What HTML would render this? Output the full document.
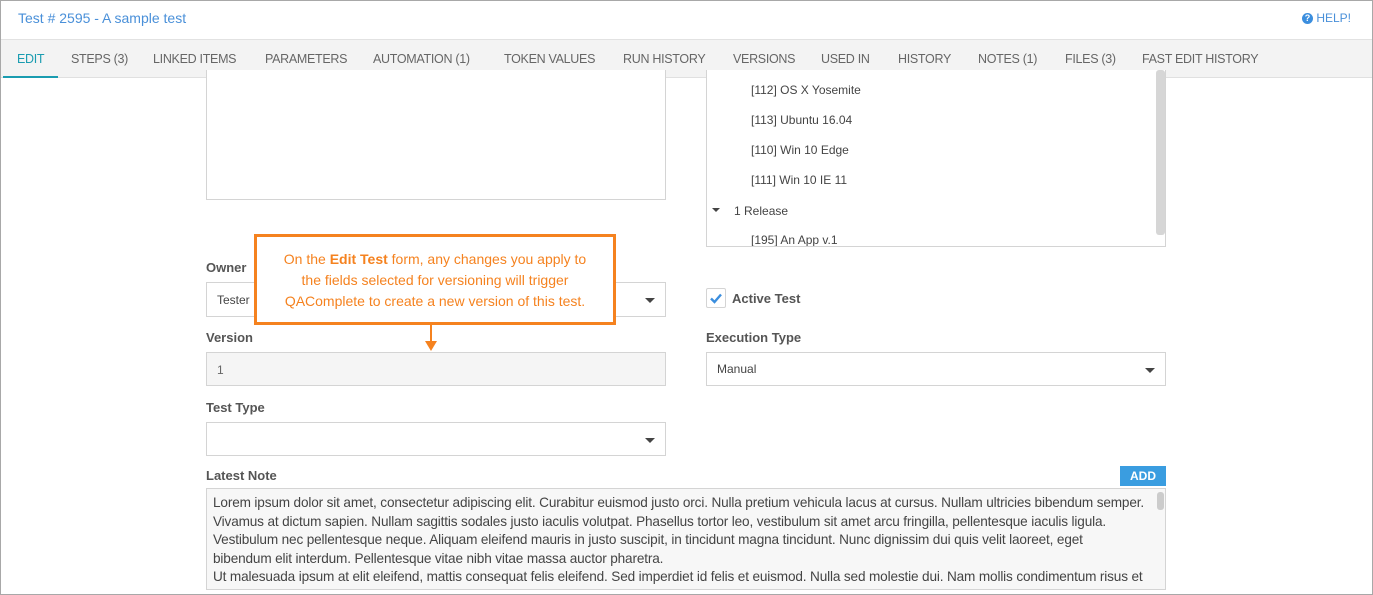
<!DOCTYPE html>
<html><head><style>
*{box-sizing:border-box;margin:0;padding:0}
body{width:1373px;height:595px;overflow:hidden;background:#fff;font-family:"Liberation Sans",sans-serif;position:relative}
.frame{position:absolute;left:0;top:0;width:1373px;height:595px;border:1px solid #a8a8a8}
.a{position:absolute;white-space:nowrap}
.title{left:18px;top:10px;font-size:14px;color:#4a90d9}
.help{right:22px;top:11px;font-size:12px;color:#4a90d9}
.tabs{left:1px;top:39px;width:1371px;height:39px;background:#f3f3f3;border-top:1px solid #e2e2e2;border-bottom:1px solid #e0e0e0}
.tab{top:12px;font-size:12.5px;color:#666;letter-spacing:-0.3px}
.lbl{font-size:13px;color:#555;font-weight:bold}
.box{position:absolute;border:1px solid #d4d4d4;background:#fff}
.caret{position:absolute;width:0;height:0;border-left:5px solid transparent;border-right:5px solid transparent;border-top:5px solid #444}
.tree{font-size:12px;color:#444}
</style></head><body>
<div class="frame"></div>
<div class="a title">Test # 2595 - A sample test</div>
<div class="a help"><span style="display:inline-block;width:11px;height:11px;border-radius:50%;background:#3b8ede;color:#fff;font-size:9px;text-align:center;line-height:11px;font-weight:bold;vertical-align:1px">?</span> HELP!</div>
<div class="a tabs">
<div class="a tab" style="left:16px;color:#1a9cb0">EDIT</div>
<div class="a" style="left:2px;top:36px;width:55px;height:2px;background:#1a9cb0"></div>
<div class="a tab" style="left:70px">STEPS (3)</div>
<div class="a tab" style="left:152px">LINKED ITEMS</div>
<div class="a tab" style="left:264px">PARAMETERS</div>
<div class="a tab" style="left:372px">AUTOMATION (1)</div>
<div class="a tab" style="left:503px">TOKEN VALUES</div>
<div class="a tab" style="left:622px">RUN HISTORY</div>
<div class="a tab" style="left:732px">VERSIONS</div>
<div class="a tab" style="left:820px">USED IN</div>
<div class="a tab" style="left:897px">HISTORY</div>
<div class="a tab" style="left:977px">NOTES (1)</div>
<div class="a tab" style="left:1064px">FILES (3)</div>
<div class="a tab" style="left:1141px">FAST EDIT HISTORY</div>
</div>
<div class="box" style="left:206px;top:70px;width:460px;height:130px;border-top:none"></div>
<div class="box" style="left:706px;top:70px;width:460px;height:177px;border-top:none;overflow:hidden">
<div class="a" style="right:0;top:0;width:9px;height:165px;background:#d6d6d6;border-radius:3px"></div>
<div class="a tree" style="left:44px;top:13px">[112] OS X Yosemite</div>
<div class="a tree" style="left:44px;top:43px">[113] Ubuntu 16.04</div>
<div class="a tree" style="left:44px;top:73px">[110] Win 10 Edge</div>
<div class="a tree" style="left:44px;top:103px">[111] Win 10 IE 11</div>
<div class="caret" style="left:5px;top:138px;border-width:4px 4px 0 4px"></div>
<div class="a tree" style="left:27px;top:134px">1 Release</div>
<div class="a tree" style="left:44px;top:163px">[195] An App v.1</div>
</div>
<div class="a lbl" style="left:206px;top:260px">Owner</div>
<div class="box" style="left:206px;top:282px;width:460px;height:35px"><div class="a" style="left:10px;top:10px;font-size:12px;color:#444">Tester</div><div class="caret" style="right:10px;top:15px"></div></div>
<div class="a lbl" style="left:206px;top:330px">Version</div>
<div class="box" style="left:206px;top:352px;width:460px;height:34px;background:#f5f5f5"><div class="a" style="left:10px;top:10px;font-size:12px;color:#666">1</div></div>
<div class="a lbl" style="left:206px;top:400px">Test Type</div>
<div class="box" style="left:206px;top:422px;width:460px;height:34px"><div class="caret" style="right:10px;top:15px"></div></div>
<div class="box" style="left:706px;top:288px;width:20px;height:20px;border-radius:2px"><svg width="18" height="18" style="position:absolute;left:0;top:0"><path d="M4 9.5 L7.5 13 L14 5.5" stroke="#3b8ede" stroke-width="2.4" fill="none"/></svg></div>
<div class="a lbl" style="left:732px;top:291px">Active Test</div>
<div class="a lbl" style="left:706px;top:330px">Execution Type</div>
<div class="box" style="left:706px;top:352px;width:460px;height:34px"><div class="a" style="left:10px;top:9px;font-size:12px;color:#444">Manual</div><div class="caret" style="right:10px;top:15px"></div></div>
<div class="a lbl" style="left:206px;top:468px">Latest Note</div>
<div class="a" style="left:1120px;top:466px;width:46px;height:20px;background:#3a9de0;color:#fff;font-size:12px;font-weight:bold;text-align:center;line-height:20px">ADD</div>
<div class="box" style="left:206px;top:488px;width:960px;height:102px;background:#f7f7f7;overflow:hidden">
<div class="a" style="right:1px;top:3px;width:7px;height:18px;background:#ccc;border-radius:3px"></div>
<div style="position:absolute;left:6px;top:5px;font-size:13.6px;line-height:18.5px;color:#444;white-space:nowrap;letter-spacing:-0.15px">
Lorem ipsum dolor sit amet, consectetur adipiscing elit. Curabitur euismod justo orci. Nulla pretium vehicula lacus at cursus. Nullam ultricies bibendum semper.<br>
Vivamus at dictum sapien. Nullam sagittis sodales justo iaculis volutpat. Phasellus tortor leo, vestibulum sit amet arcu fringilla, pellentesque iaculis ligula.<br>
Vestibulum nec pellentesque neque. Aliquam eleifend mauris in justo suscipit, in tincidunt magna tincidunt. Nunc dignissim dui quis velit laoreet, eget<br>
bibendum elit interdum. Pellentesque vitae nibh vitae massa auctor pharetra.<br>
Ut malesuada ipsum at elit eleifend, mattis consequat felis eleifend. Sed imperdiet id felis et euismod. Nulla sed molestie dui. Nam mollis condimentum risus et
</div></div>
<div class="a" style="left:254px;top:234px;width:362px;height:91px;background:#fff;border:3px solid #f5821f;white-space:nowrap;text-align:center;color:#f5821f;font-size:14px;line-height:21px;padding-top:12px">On the <b>Edit Test</b> form, any changes you apply to<br>the fields selected for versioning will trigger<br>QAComplete to create a new version of this test.</div>
<div class="a" style="left:430px;top:325px;width:2px;height:18px;background:#f5821f"></div>
<div class="a" style="left:425px;top:341px;width:0;height:0;border-left:6px solid transparent;border-right:6px solid transparent;border-top:10px solid #f5821f"></div>
</body></html>
